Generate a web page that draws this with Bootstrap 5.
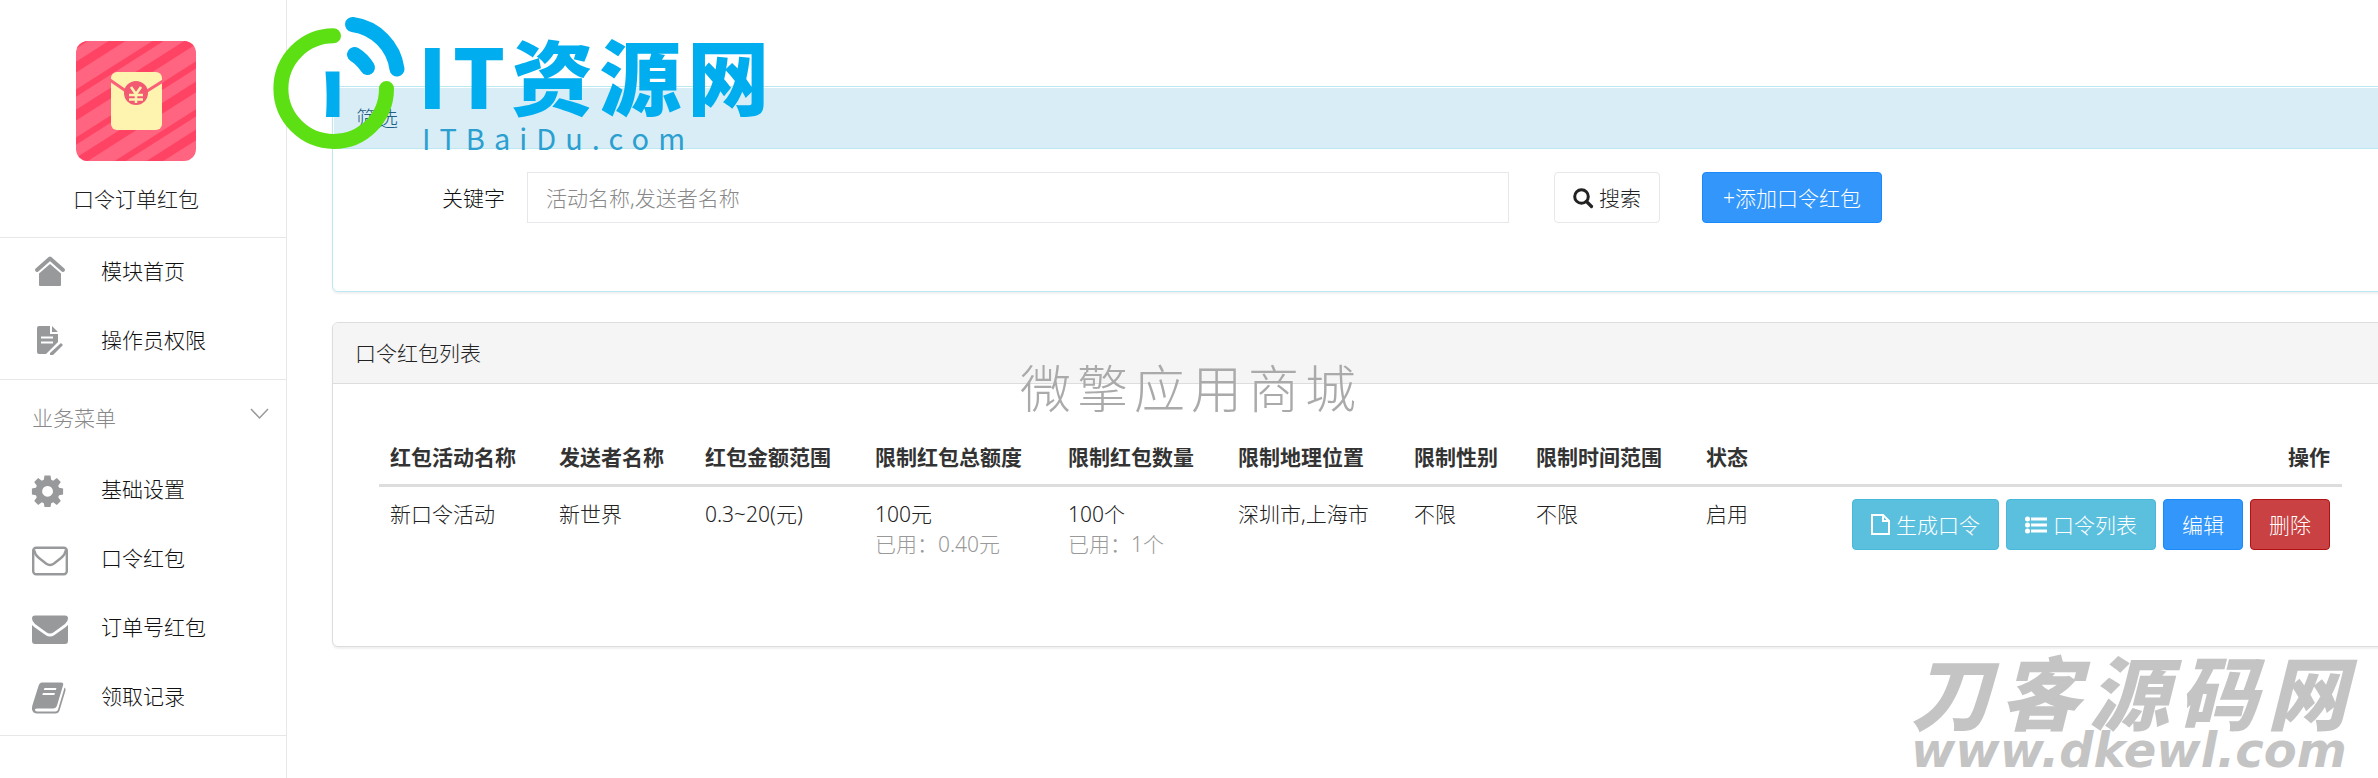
<!DOCTYPE html>
<html lang="zh-CN">
<head>
<meta charset="utf-8">
<meta name="viewport" content="width=device-width, initial-scale=1">
<title>口令订单红包</title>
<link href="https://cdn.jsdelivr.net/npm/bootstrap@5.3.0/dist/css/bootstrap.min.css" rel="stylesheet">
<style>
body{font:300 21px/30px "Noto Sans","Noto Sans CJK SC",sans-serif;color:#222;background:#fff;overflow-x:hidden}
a{text-decoration:none}
svg{overflow:visible}
.shell{min-height:100vh}
.side{width:287px;border-right:1px solid #e7e7e7;font-family:"Noto Sans CJK SC",sans-serif}
.side-head{padding:41px 14px 24px 0}
.side-name{margin-top:22px}
.side-group{border-top:1px solid #e7e7e7;padding-bottom:3px}
.side-group:last-child{border-bottom:1px solid #e7e7e7}
.side-link{height:69px;padding:0 0 6px 32px;color:#111}
.side-link svg{width:36px;height:36px;margin-right:33px;fill:#97999b}
.side-title{height:76px;padding:0 17px 2px 32px;color:#888}
.page{padding:86px 0 0 45px;margin-right:-8px;min-width:0}
.panel{border:1px solid #ddd;border-radius:6px;box-shadow:0 2px 2px rgba(0,0,0,.06);background:#fff}
.panel-top{padding:15px 22px;border-bottom:1px solid #ddd;background:#f5f5f5;border-radius:5px 5px 0 0}
.panel-info{border-color:#bce8f1;margin-bottom:30px;padding:1px 0 0 1px}
.panel-info .panel-top{color:#1f6084;background:#d9edf7;border-color:#bce8f1}
.filter-body{padding:23px 0 68px}
.filter-body label{width:193px;padding-right:22px;text-align:right;color:#111}
.filter-body .form-control{width:982px;height:51px;border:1px solid #e7e7eb;border-radius:0;padding:0 18px;font-size:21px;font-weight:300}
.filter-body .form-control::placeholder{color:#888}
.btn{--bs-btn-font-size:21px;--bs-btn-line-height:30px;--bs-btn-font-weight:300;--bs-btn-padding-x:18px;--bs-btn-padding-y:0;--bs-btn-border-radius:4px;height:51px;white-space:nowrap;display:inline-flex;align-items:center;gap:6px}
.btn svg{fill:currentColor}
.btn-find{color:#222;background:#fff;border-color:#e7e7eb;margin:0 42px 0 45px}
.btn-blue{color:#fff;background:#3296fa;border-color:#1a89fa}
.btn-add{--bs-btn-padding-x:20px}
.btn-cyan{color:#fff;background:#5bc0de;border-color:#46b8da}
.btn-red{color:#fff;background:#c94143;border-color:#b01214}
.btn-set{gap:7px}
.list-body{padding:47px 43px 75px 46px}
.list-table{margin:0;table-layout:fixed;--bs-table-color:#222}
.list-table>:not(caption)>*>*{padding:12px 12px 12px 11px}
.list-table>thead>tr>th{padding-top:11px;color:#333;font-weight:700;border-bottom:3px solid #ddd;white-space:nowrap}
.list-table>tbody>tr>td{border:0}
.used{color:#999}
.w1{width:169px}.w2{width:146px}.w3{width:170px}.w4{width:193px}.w5{width:170px}.w6{width:176px}.w7{width:122px}.w8{width:170px}.w9{width:110px}
.logo-layer{position:absolute;pointer-events:none;white-space:nowrap;font-family:"Noto Sans CJK SC",sans-serif}
.logo-it{left:268px;top:10px}
.logo-it svg{width:150px;height:150px}
.logo-words{padding-top:22px;color:#00aeef}
.logo-name{font-size:82px;line-height:84px;font-weight:900;letter-spacing:6px}
.logo-site{font-size:29px;line-height:30px;font-weight:400;letter-spacing:9px;color:#2a9fd0;padding:6px 0 0 4px}
.logo-mall{left:1020px;top:348px;font-size:51px;line-height:76px;letter-spacing:6px;color:#aaa}
.logo-end{right:22px;top:647px;color:#c4c4c4;font-style:italic;font-weight:900}
.logo-end-name{font-size:80px;line-height:84px;letter-spacing:9px}
.logo-end-site{font:italic 700 48px/56px "DejaVu Sans",sans-serif;margin-top:-9px}
</style>
</head>
<body>
<div class="shell d-flex position-relative overflow-hidden">
<nav class="side flex-shrink-0">
  <div class="side-head text-center">
    <svg width="120" height="120" viewBox="0 0 120 120" class="d-block mx-auto">
      <defs><clipPath id="tile"><rect width="120" height="120" rx="12"/></clipPath></defs>
      <g clip-path="url(#tile)" fill="none" stroke="#ff4364"><rect width="120" height="120" fill="#ff6581" stroke="none"/>
      <path stroke-width="9" d="M-3 28l126-80M-3 76l126-80M-3 124l126-80M-3 172l126-80"/>
      <path stroke-width="6" d="M-3 6l126-80M-3 54l126-80M-3 102l126-80M-3 150l126-80M-3 198l126-80"/></g>
      <rect x="35" y="31" width="51" height="58" rx="6" fill="#fff3b0"/>
      <path d="M34 39l26 18 27-17" stroke="#fb6079" stroke-width="3" fill="none"/><circle cx="60" cy="52" r="12" fill="#f25a72"/>
      <path d="M55 46l5 7 5-7M53 54h14M53 58.500h14M60 53v9" stroke="#fff3b0" stroke-width="2.600" fill="none"/>
    </svg>
    <div class="side-name">口令订单红包</div>
  </div>
  <div class="side-group">
    <a href="#" class="side-link d-flex align-items-center"><svg viewBox="0 0 36 36"><path d="M5 18L18 6.500 31 18" fill="none" stroke="#97999b" stroke-width="4" stroke-linecap="round" stroke-linejoin="round"/><path d="M18 12l11 9.500V33q0 1-1 1H8q-1 0-1-1V21.500z"/></svg>模块首页</a>
    <a href="#" class="side-link d-flex align-items-center"><svg viewBox="0 0 36 36"><path fill-rule="evenodd" d="M7 5h11v8h8v8L14 33H7q-2 0-2-2V7q0-2 2-2zM9 15.500v2h12v-2zm0 5v2h12v-2z"/><path d="M20 5l6 6h-6zM29 22l2 2-10 10h-3v-2z"/></svg>操作员权限</a>
  </div>
  <div class="side-group">
    <div class="side-title d-flex align-items-center justify-content-between">业务菜单<svg class="mb-2" width="19" height="11" viewBox="0 0 19 11" fill="none" stroke="#999" stroke-width="1.500"><path d="M1 1l8.500 9L18 1"/></svg></div>
    <a href="#" class="side-link d-flex align-items-center"><svg viewBox="0 0 36 36"><path fill-rule="evenodd" d="M12.500 5.500h6l.7 4.300 2 .9 3.600-2.600 4 4-2.600 3.600.9 2.100 4 .7v6l-4 .7-.9 2.100 2.600 3.600-4 4-3.600-2.600-2 .9-.7 3.800h-6l-.7-3.800-2-.9-3.600 2.600-4-4 2.600-3.600-.9-2.100-4-.7v-6l4-.7.9-2.100-2.600-3.600 4-4 3.600 2.600 2-.9zM15.500 16a5.400 5.400 0 1 0 .1 0z"/></svg>基础设置</a>
    <a href="#" class="side-link d-flex align-items-center"><svg viewBox="0 0 36 36"><rect x="1.200" y="8.700" width="33.600" height="26.600" rx="3" fill="none" stroke="#97999b" stroke-width="2.400"/><path d="M2 11q1 5 5 8l7 5.500q4 3 8 0l7-5.500q4-3 5-8" fill="none" stroke="#97999b" stroke-width="2.400"/></svg>口令红包</a>
    <a href="#" class="side-link d-flex align-items-center"><svg viewBox="0 0 36 36"><path d="M3 7.500h30q3 0 3 3 0 3-3 5.500l-11 8q-4 3-8 0L3 16q-3-2.500-3-5.500 0-3 3-3z"/><path d="M0 17q1 1 2.500 2.200l11 7.800q4.500 3 9 0l11-7.800Q35 18 36 17v16q0 3-3 3H3q-3 0-3-3z"/></svg>订单号红包</a>
    <a href="#" class="side-link d-flex align-items-center"><svg viewBox="0 0 36 36"><path fill-rule="evenodd" d="M10 5.500h19q3 0 2 3l-6 20q-1 3-4 3H5q-2.500 0-2 1.500t2.500 1.500h18q2 0 2.500-2l6-20q.3-1 .2-2 2 1 1.300 3l-6 20q-1 3-4 3H5q-4 0-5-4-.3-2 .5-4.500L6.500 9q1-3.500 3.500-3.500zM12.500 11l-.7 2h12l.7-2zm-1.500 5l-.7 2h12l.7-2z"/></svg>领取记录</a>
  </div>
</nav>
<main class="page flex-grow-1">
  <section class="panel panel-info">
    <div class="panel-top">筛选</div>
    <form class="filter-body d-flex align-items-center">
      <label for="kw">关键字</label>
      <input id="kw" type="text" class="form-control" placeholder="活动名称,发送者名称">
      <button type="button" class="btn btn-find"><svg width="20" height="20" viewBox="0 0 20 20"><path d="M13.500 13.500l5 5" stroke="currentColor" stroke-width="3.200" stroke-linecap="round"/><circle cx="8.500" cy="8.500" r="6.800" fill="none" stroke="currentColor" stroke-width="3"/></svg>搜索</button>
      <button type="button" class="btn btn-blue btn-add">+添加口令红包</button>
    </form>
  </section>
  <section class="panel">
    <div class="panel-top">口令红包列表</div>
    <div class="list-body">
      <table class="table list-table">
        <thead><tr><th class="w1">红包活动名称</th><th class="w2">发送者名称</th><th class="w3">红包金额范围</th><th class="w4">限制红包总额度</th><th class="w5">限制红包数量</th><th class="w6">限制地理位置</th><th class="w7">限制性别</th><th class="w8">限制时间范围</th><th class="w9">状态</th><th class="text-end">操作</th></tr></thead>
        <tbody><tr><td>新口令活动</td><td>新世界</td><td>0.3~20(元)</td><td>100元<br><span class="used">已用：0.40元</span></td><td>100个<br><span class="used">已用：1个</span></td><td class="text-nowrap">深圳市,上海市</td><td>不限</td><td>不限</td><td>启用</td>
        <td><div class="btn-set d-flex justify-content-end">
          <button type="button" class="btn btn-cyan"><svg width="19" height="21" viewBox="0 0 19 21"><path d="M1 1h11l6 6v13H1zM12 1v6h6" fill="none" stroke="currentColor" stroke-width="2"/></svg>生成口令</button>
          <button type="button" class="btn btn-cyan"><svg width="22" height="18" viewBox="0 0 22 18"><circle cx="2.500" cy="3" r="2.500"/><circle cx="2.500" cy="9" r="2.500"/><circle cx="2.500" cy="15" r="2.500"/><path d="M6 1.500h16v3H6zM6 7.500h16v3H6zM6 13.500h16v3H6z"/></svg>口令列表</button>
          <button type="button" class="btn btn-blue">编辑</button>
          <button type="button" class="btn btn-red">删除</button>
        </div></td></tr></tbody>
      </table>
    </div>
  </section>
</main>
<div class="logo-layer logo-it d-flex">
  <svg viewBox="0 0 150 150" fill="none" stroke-width="15" stroke-linecap="round"><path stroke="#5ce014" d="M65.500 25.800A52.800 52.800 0 1 0 118.500 78.500"/><path stroke="#00aeef" d="M84.500 14.500A52 52 0 0 1 129 59"/><path stroke="#00aeef" d="M86.500 44.500Q94 49 99.500 57.500"/><path fill="#00aeef" d="M57.500 61.500h14V107H58q1.500-22-.5-45.500z"/></svg>
  <div class="logo-words"><div class="logo-name">IT资源网</div><div class="logo-site">ITBaiDu.com</div></div>
</div>
<div class="logo-layer logo-mall">微擎应用商城</div>
<div class="logo-layer logo-end"><div class="logo-end-name">刀客源码网</div><div class="logo-end-site">www.dkewl.com</div></div>
</div>
<script src="https://cdn.jsdelivr.net/npm/bootstrap@5.3.0/dist/js/bootstrap.bundle.min.js"></script>
</body>
</html>
